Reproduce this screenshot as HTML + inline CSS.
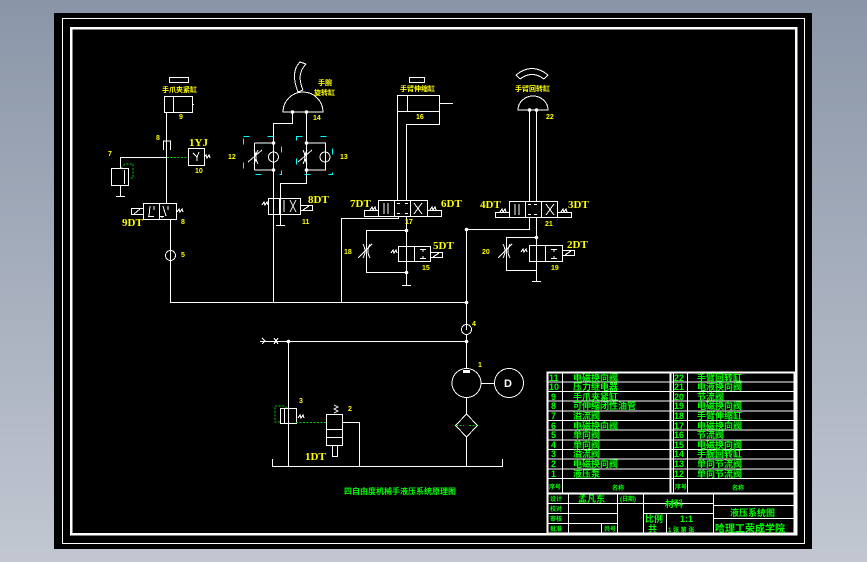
<!DOCTYPE html>
<html><head><meta charset="utf-8"><style>
html,body{margin:0;padding:0;width:867px;height:562px;overflow:hidden;background:linear-gradient(#8a96a8,#c2c7d1);}
svg{display:block}
text{font-family:"Liberation Sans","Noto Sans CJK SC",sans-serif;font-weight:bold}
.y{fill:#ffff00;font-size:7px}
.Y{fill:#ffff00;font-size:11px;font-family:"Liberation Serif","Noto Serif CJK SC",serif}
.g{fill:#00ff00;font-size:9px}
.gs{fill:#00ff00;font-size:6px}
</style></head><body>
<svg width="867" height="562" viewBox="0 0 867 562" xmlns="http://www.w3.org/2000/svg">
<rect x="54" y="13" width="758" height="536" fill="#000"/>
<g fill="none" stroke="#fff" stroke-width="1" shape-rendering="crispEdges">
<rect x="62.5" y="18.5" width="742" height="525"/>
<rect x="71" y="28" width="725" height="506" stroke-width="2.5"/>
<!-- left column -->
<rect x="164.5" y="96.5" width="28" height="16"/><line x1="173.5" y1="96" x2="173.5" y2="112"/><line x1="192" y1="104.5" x2="194" y2="104.5"/>
<rect x="169.5" y="77.5" width="19" height="5"/>
<line x1="166.5" y1="112" x2="166.5" y2="203"/>
<path d="M163.5 150V141h7v9"/>
<path d="M120.5 168V157.5H167"/>
<rect x="188.5" y="148.5" width="16" height="17"/><path d="M193 153l4 4v4M199 152l-2 5"/><path d="M204 157l2 -2 1 3 2 -3 1 3"/>
<rect x="111.5" y="168.5" width="17" height="17"/><line x1="124.5" y1="170" x2="124.5" y2="184"/>
<path d="M120.5 186v10M116 196.5h9"/>
<rect x="143.5" y="203.5" width="33" height="16"/><line x1="159.5" y1="203" x2="159.5" y2="219"/>
<path d="M150 206l-1 10M154 206v4M163 206l3 10M168 206v4M148 216.5h6M160 216.5h4M162 216v2"/>
<rect x="131.5" y="208.5" width="12" height="6"/><line x1="134" y1="214" x2="140" y2="209"/>
<path d="M177 212l2-3 1 3 2-3 1 3"/>
<line x1="170.5" y1="219" x2="170.5" y2="302"/>
<circle cx="170.5" cy="255.5" r="5"/>
<line x1="170" y1="302.5" x2="466" y2="302.5"/>
<!-- 14 / 12 / 13 / 11 -->
<path d="M283 112 A20 20 0 0 1 323 112 Z"/>
<path d="M300 62 Q290 72 298 92 M306 64 Q296 74 303 90 M300 62 l6 2 M298 92 l5 -2"/>
<path d="M292.5 112V123.5H273.5V143"/>
<path d="M306.5 112V143"/>
<line x1="273.5" y1="143" x2="273.5" y2="302"/>
<path d="M254.5 143h19M254.5 170h19M254.5 143v27"/>
<circle cx="273.5" cy="157" r="5"/>
<path d="M248 162l14-12M254 150 q4 7 0 14 M258 150 q-4 7 0 14"/>
<path d="M306.5 143h19v27h-19"/><line x1="306.5" y1="143" x2="306.5" y2="183"/>
<circle cx="325" cy="157" r="5"/>
<path d="M298 162l14-12M303 150 q4 7 0 14 M307 150 q-4 7 0 14"/>
<path d="M306.5 170V183.5H280.5V225M276 225.5h9"/>
<rect x="268.5" y="198.5" width="32" height="16"/><line x1="279.5" y1="198" x2="279.5" y2="214"/>
<line x1="284" y1="200" x2="284" y2="212"/><path d="M290 200l6 12M296 200l-6 12"/>
<rect x="300.5" y="205.5" width="12" height="5"/><line x1="303" y1="210" x2="309" y2="206"/>
<path d="M262 205l2-3 1 3 2-3 1 3"/>
<!-- 16 / 17 / 15 -->
<rect x="397.5" y="95.5" width="42" height="16"/><line x1="407.5" y1="95" x2="407.5" y2="111"/><line x1="440" y1="103.5" x2="453" y2="103.5"/>
<rect x="409.5" y="77.5" width="15" height="5"/>
<line x1="397.5" y1="111" x2="397.5" y2="201"/>
<path d="M439.5 111V124.5H406.5V201"/>
<rect x="378.5" y="200.5" width="49" height="16"/>
<line x1="394.5" y1="200" x2="394.5" y2="216"/><line x1="410.5" y1="200" x2="410.5" y2="216"/>
<path d="M384 203v11M388 203v11M397 203.5h3M405 203.5h3M397 213.5h3M405 213.5h3M414 203l8 11M422 203l-8 11"/>
<rect x="364.5" y="210.5" width="14" height="6"/><rect x="427.5" y="210.5" width="14" height="6"/>
<path d="M370 210l2-3 1 3 2-3 1 3M430 210l2-3 1 3 2-3 1 3"/>
<path d="M398.5 216V218.5H341.5V302"/>
<path d="M406.5 216V285M402 285.5h9"/>
<path d="M406.5 230.5H366.5V272.5H406.5"/>
<rect x="398.5" y="246.5" width="32" height="15"/><line x1="414.5" y1="246" x2="414.5" y2="261"/>
<path d="M420 249.5h6M423 249v3M420 258.5h6M423 256v3"/>
<rect x="430.5" y="252.5" width="12" height="5"/><line x1="433" y1="257" x2="439" y2="253"/>
<path d="M391 253l2-3 1 3 2-3 1 3"/>
<path d="M358 258l14-14M363 244 q4 7 0 14 M370 244 q-4 7 0 14"/>
<!-- 22 / 21 / 19 -->
<path d="M518 110 A15 14 0 0 1 548 110 Z"/>
<path d="M516 75 Q532 62 548 75 M520 79 Q532 70 544 79 M516 75l4 4M548 75l-4 4"/>
<line x1="529.5" y1="110" x2="529.5" y2="201"/><line x1="536.5" y1="110" x2="536.5" y2="201"/>
<rect x="509.5" y="201.5" width="48" height="16"/>
<line x1="525.5" y1="201" x2="525.5" y2="217"/><line x1="541.5" y1="201" x2="541.5" y2="217"/>
<path d="M515 204v11M519 204v11M528 204.5h3M534 204.5h3M528 214.5h3M534 214.5h3M546 204l8 11M554 204l-8 11"/>
<rect x="495.5" y="212.5" width="14" height="5"/><rect x="557.5" y="212.5" width="14" height="5"/>
<path d="M500 212l2-3 1 3 2-3 1 3M561 212l2-3 1 3 2-3 1 3"/>
<path d="M529.5 217V229.5H466.5V330"/>
<path d="M536.5 217V281M532 281.5h9"/>
<path d="M536.5 237.5H506.5V270.5H536.5"/>
<rect x="529.5" y="245.5" width="33" height="16"/><line x1="545.5" y1="245" x2="545.5" y2="261"/>
<path d="M551 249.5h6M554 249v3M551 258.5h6M554 256v3"/>
<rect x="562.5" y="250.5" width="12" height="5"/><line x1="565" y1="255" x2="571" y2="251"/>
<path d="M521 252l2-3 1 3 2-3 1 3"/>
<path d="M498 258l14-14M503 244 q4 7 0 14 M510 244 q-4 7 0 14"/>
<!-- bottom -->
<circle cx="466.5" cy="329.5" r="5"/>
<line x1="466.5" y1="334" x2="466.5" y2="369"/>
<line x1="260" y1="341.5" x2="466" y2="341.5"/>
<path d="M262 338l3 3-3 3M274 338l4 6M278 338l-4 6"/>
<circle cx="466.5" cy="383" r="14.5"/><line x1="481" y1="383.5" x2="495" y2="383.5"/>
<circle cx="509" cy="383" r="14.5"/>
<path d="M466.5 397V414L477.5 425.5 466.5 437 455.5 425.5 466.5 414M466.5 437V466"/>
<path d="M272.5 459V466.5H502.5V459"/>
<line x1="288.5" y1="341" x2="288.5" y2="466"/>
<rect x="280.5" y="408.5" width="16" height="15"/><line x1="284.5" y1="408" x2="284.5" y2="423"/>
<path d="M298 418l2-3 1 3 2-3 1 3"/>
<rect x="326.5" y="414.5" width="16" height="31"/><path d="M327 429.5h15M327 437.5h15"/>
<rect x="332.5" y="445.5" width="5" height="11"/>
<path d="M334 405l4 2-4 2 4 2-4 2"/>
<path d="M342 422.5H359.5V466"/>
</g>
<g fill="#fff">
<circle cx="292.5" cy="112" r="1.8"/><circle cx="306.5" cy="112" r="1.8"/>
<circle cx="273.5" cy="143" r="1.8"/><circle cx="273.5" cy="170" r="1.8"/>
<circle cx="306.5" cy="143" r="1.8"/><circle cx="306.5" cy="170" r="1.8"/>
<circle cx="529.5" cy="110" r="1.8"/><circle cx="536.5" cy="110" r="1.8"/>
<circle cx="406.5" cy="230.5" r="1.8"/><circle cx="406.5" cy="272.5" r="1.8"/>
<circle cx="536.5" cy="237.5" r="1.8"/><circle cx="466.5" cy="229.5" r="1.8"/>
<circle cx="466.5" cy="302.5" r="1.8"/><circle cx="466.5" cy="341.5" r="1.8"/><circle cx="288.5" cy="341.5" r="1.8"/>
<path d="M463 373h7v-3h-7z"/>
</g>
<g fill="none" stroke="#00ffff" stroke-width="1" stroke-dasharray="6 18">
<rect x="243.5" y="136.5" width="38" height="38"/><rect x="296.5" y="136.5" width="36" height="38"/>
</g>
<g fill="none" stroke="#00cc00" stroke-width="1" stroke-dasharray="2 1.5">
<line x1="167" y1="157.5" x2="188" y2="157.5"/>
<path d="M121 168l4-4h8v14h-3"/>
<path d="M287 408l-3-2h-9v16h6"/>
<path d="M296 422.5h30"/>
<path d="M456 425.5h8M469 425.5h8"/>
</g>
<g>
<text class="y" x="162" y="92">手爪夹紧缸</text><text class="y" x="179" y="119">9</text>
<text class="y" x="156" y="140">8</text><text class="y" x="108" y="156">7</text>
<text class="Y" x="189" y="146">1YJ</text><text class="y" x="195" y="173">10</text>
<text class="Y" x="122" y="226">9DT</text><text class="y" x="181" y="224">8</text>
<text class="y" x="181" y="257">5</text>
<text class="y" x="318" y="85">手腕</text><text class="y" x="314" y="95">旋转缸</text>
<text class="y" x="313" y="120">14</text><text class="y" x="228" y="159">12</text><text class="y" x="340" y="159">13</text>
<text class="Y" x="308" y="203">8DT</text><text class="y" x="302" y="224">11</text>
<text class="y" x="400" y="91">手臂伸缩缸</text><text class="y" x="416" y="119">16</text>
<text class="Y" x="350" y="207">7DT</text><text class="Y" x="441" y="207">6DT</text><text class="y" x="405" y="224">17</text>
<text class="y" x="344" y="254">18</text><text class="Y" x="433" y="249">5DT</text><text class="y" x="422" y="270">15</text>
<text class="y" x="515" y="91">手臂回转缸</text><text class="y" x="546" y="119">22</text>
<text class="Y" x="480" y="208">4DT</text><text class="Y" x="568" y="208">3DT</text><text class="y" x="545" y="226">21</text>
<text class="y" x="482" y="254">20</text><text class="Y" x="567" y="248">2DT</text><text class="y" x="551" y="270">19</text>
<text class="y" x="472" y="326">4</text><text class="y" x="478" y="367">1</text>
<text class="y" x="299" y="403">3</text><text class="y" x="348" y="411">2</text>
<text class="Y" x="305" y="460">1DT</text>
<text fill="#fff" font-size="11" x="504" y="387">D</text>
<text class="gs" x="344" y="494" style="font-size:8px">四自由度机械手液压系统原理图</text>
</g>
<!-- title block -->
<g fill="none" stroke="#fff" stroke-width="1" shape-rendering="crispEdges">
<rect x="547.5" y="372.5" width="247" height="161" stroke-width="2"/>
<line x1="562.5" y1="372" x2="562.5" y2="493"/>
<line x1="670.5" y1="372" x2="670.5" y2="493" stroke-width="2"/>
<line x1="673.5" y1="372" x2="673.5" y2="493"/>
<line x1="687.5" y1="372" x2="687.5" y2="493"/>
<path d="M547 382h248M547 391.5h248M547 401h248M547 411h248M547 420.5h248M547 430h248M547 440h248M547 449.5h248M547 459h248M547 469h248M547 478.5h248"/>
<line x1="547" y1="493.5" x2="795" y2="493.5" stroke-width="2"/>
<path d="M547 503.5h166M547 513.5h70M547 523.5h70M643 513.5h70M713 505.5h82M713 518.5h82"/>
<path d="M568.5 493v41M617.5 493v41M643.5 493v41M666.5 513v21M713.5 493v41M601.5 523v11"/>
</g>
<g class="g">
<text class="g" x="549" y="381">11</text><text class="g" x="573" y="381">电磁换向阀</text>
<text class="g" x="549" y="390">10</text><text class="g" x="573" y="390">压力继电器</text>
<text class="g" x="551" y="400">9</text><text class="g" x="573" y="400">手爪夹紧缸</text>
<text class="g" x="551" y="409">8</text><text class="g" x="573" y="409">可伸缩闭性油管</text>
<text class="g" x="551" y="419">7</text><text class="g" x="573" y="419">溢流阀</text>
<text class="g" x="551" y="429">6</text><text class="g" x="573" y="429">电磁换向阀</text>
<text class="g" x="551" y="438">5</text><text class="g" x="573" y="438">单向阀</text>
<text class="g" x="551" y="448">4</text><text class="g" x="573" y="448">单向阀</text>
<text class="g" x="551" y="457">3</text><text class="g" x="573" y="457">溢流阀</text>
<text class="g" x="551" y="467">2</text><text class="g" x="573" y="467">电磁换向阀</text>
<text class="g" x="551" y="477">1</text><text class="g" x="573" y="477">液压泵</text>
<text class="gs" x="549" y="489">序号</text><text class="gs" x="612" y="490">名称</text>
<text class="g" x="674" y="381">22</text><text class="g" x="697" y="381">手臂回转缸</text>
<text class="g" x="674" y="390">21</text><text class="g" x="697" y="390">电液换向阀</text>
<text class="g" x="674" y="400">20</text><text class="g" x="697" y="400">节流阀</text>
<text class="g" x="674" y="409">19</text><text class="g" x="697" y="409">电磁换向阀</text>
<text class="g" x="674" y="419">18</text><text class="g" x="697" y="419">手臂伸缩缸</text>
<text class="g" x="674" y="429">17</text><text class="g" x="697" y="429">电磁换向阀</text>
<text class="g" x="674" y="438">16</text><text class="g" x="697" y="438">节流阀</text>
<text class="g" x="674" y="448">15</text><text class="g" x="697" y="448">电磁换向阀</text>
<text class="g" x="674" y="457">14</text><text class="g" x="697" y="457">手腕回转缸</text>
<text class="g" x="674" y="467">13</text><text class="g" x="697" y="467">单向节流阀</text>
<text class="g" x="674" y="477">12</text><text class="g" x="697" y="477">单向节流阀</text>
<text class="gs" x="675" y="489">序号</text><text class="gs" x="732" y="490">名称</text>
<text class="gs" x="550" y="501">设计</text><text class="g" x="578" y="502">孟凡东</text><text class="gs" x="620" y="501">(日期)</text>
<text class="gs" x="550" y="511">校对</text><text class="gs" x="550" y="521">审核</text><text class="gs" x="550" y="531">批准</text>
<text class="gs" x="604" y="531">共号</text>
<text class="g" x="665" y="507">材料</text>
<text class="g" x="645" y="522">比例</text><text class="g" x="680" y="522">1:1</text>
<text class="g" x="648" y="532">共</text><text class="gs" x="668" y="532">1 张 第 张</text>
<text class="g" x="730" y="516">液压系统图</text>
<text class="g" x="715" y="532" style="font-size:10px">哈理工荣成学院</text>
</g>
</svg>
</body></html>
